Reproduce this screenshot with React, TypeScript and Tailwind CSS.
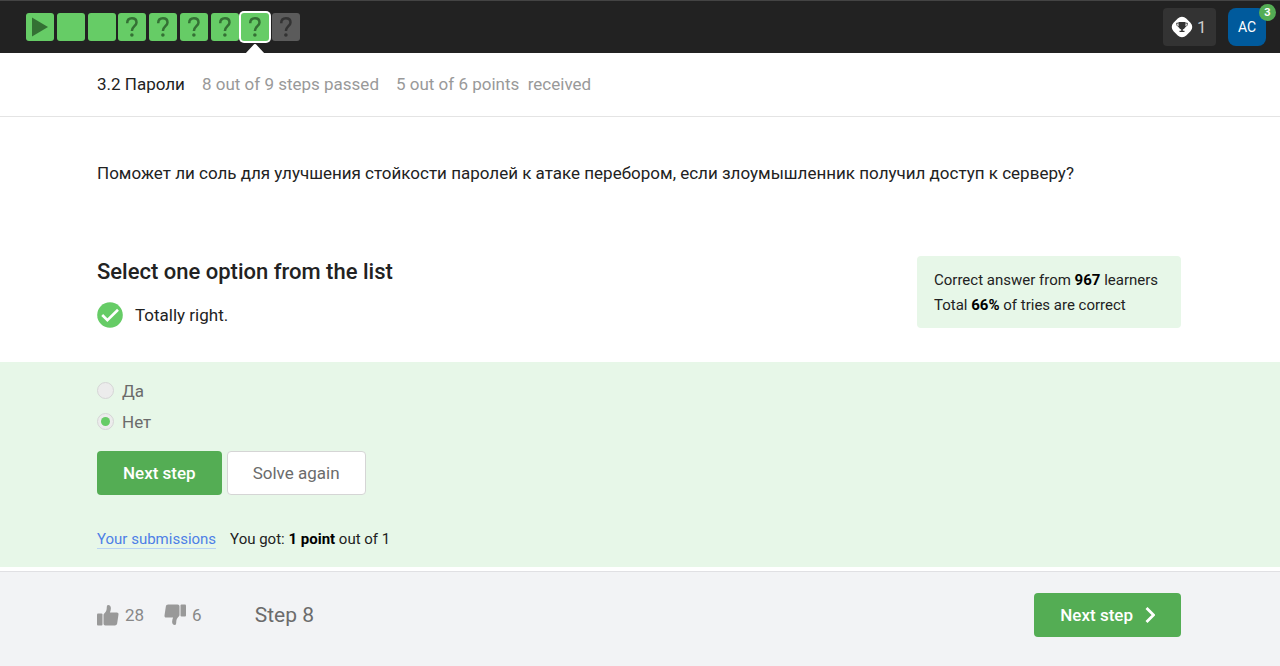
import React, { useState } from "react";

const GUTTER = "pl-[97px] pr-[99px]";

type StepKind = "video" | "text" | "quiz";

const steps: { kind: StepKind; passed: boolean }[] = [
  { kind: "video", passed: true },
  { kind: "text", passed: true },
  { kind: "text", passed: true },
  { kind: "quiz", passed: true },
  { kind: "quiz", passed: true },
  { kind: "quiz", passed: true },
  { kind: "quiz", passed: true },
  { kind: "quiz", passed: true },
  { kind: "quiz", passed: false },
];

const currentStep = 7;

function QuizGlyph() {
  return (
    <svg viewBox="0 0 28 28" className="size-7" fill="none" aria-hidden="true">
      <path
        d="M9.200 10.200C9.200 6.800 11.200 5.200 13.900 5.200s4.600 1.600 4.600 4.200c0 3.700-4.600 4-4.600 8.600"
        stroke="currentColor"
        strokeWidth="2.500"
      />
      <circle cx="13.900" cy="22" r="1.800" fill="currentColor" />
    </svg>
  );
}

function PlayGlyph() {
  return (
    <svg viewBox="0 0 28 28" className="size-7" fill="currentColor" aria-hidden="true">
      <path d="M6 4.500v19L22 14z" />
    </svg>
  );
}

function StepTile({ index, kind, passed }: { index: number; kind: StepKind; passed: boolean }) {
  const active = index === currentStep;
  return (
    <li className="relative">
      <a
        href={"#step-" + (index + 1)}
        aria-label={"Step " + (index + 1)}
        aria-current={active ? "step" : undefined}
        className={
          "flex size-7 items-center justify-center rounded-[3px] " +
          (passed ? "bg-[#66cc66] text-[#347034] " : "bg-[#5b5b5b] text-[#333333] ") +
          (active ? "ring-2 ring-white" : "")
        }
      >
        {kind === "video" && <PlayGlyph />}
        {kind === "quiz" && <QuizGlyph />}
      </a>
      {active && (
        <svg viewBox="0 0 20 10" className="absolute top-[31px] left-1 h-[10px] w-5" fill="#ffffff" aria-hidden="true">
          <path d="M0 10 8.800 .6a1.600 1.600 0 0 1 2.400 0L20 10z" />
        </svg>
      )}
    </li>
  );
}

function ThumbIcon({ down = false }: { down?: boolean }) {
  return (
    <svg viewBox="0 0 22 22" className={down ? "size-[22px] rotate-180" : "size-[22px]"} fill="#999999" aria-hidden="true">
      <rect x="0" y="9.500" width="5.500" height="12" rx="1" />
      <path d="M6.500 11.200c0-.9.5-1.500 1.200-2.200 1.300-1.400 1.900-2.600 2-4.500.1-1.800.1-3.500 1.500-3.500 1.800 0 2.700 1.400 2.700 3.300 0 1.600-.5 3-1 4.200h6.800c1.300 0 2 .9 1.800 2.100l-1.300 8.700c-.2 1.300-1 2.200-2.400 2.200H8.500c-1.300 0-2-.7-2-2z" />
    </svg>
  );
}

function TrophyBadge() {
  return (
    <svg viewBox="0 0 22 22" className="size-[22px]" aria-hidden="true">
      <rect x="2" y="2" width="18" height="18" rx="6" fill="#ffffff" transform="rotate(45 11 11)" />
      <path d="M7.500 6h7v3.500c0 2.200-1.300 3.600-2.700 4v1.200h1.700V16h-5v-1.300h1.700v-1.200c-1.400-.4-2.700-1.800-2.700-4z" fill="#333333" />
      <path d="M7.500 7.200H5.600c0 2 .8 3.300 2.400 3.700M14.500 7.200h1.900c0 2-.8 3.300-2.400 3.700" fill="none" stroke="#333333" strokeWidth=".9" />
    </svg>
  );
}

function CheckBadge() {
  return (
    <svg viewBox="0 0 26 26" className="size-[26px]" fill="none" aria-hidden="true">
      <circle cx="13" cy="13" r="12.800" fill="#66cc66" />
      <path d="m5.200 13 5.200 5.200L21 7.800" stroke="#ffffff" strokeWidth="2.600" />
    </svg>
  );
}

const options = ["Да", "Нет"];

export default function App() {
  const [answer, setAnswer] = useState("Нет");

  return (
    <div className="flex min-h-screen flex-col bg-white font-[Roboto,sans-serif] text-[17px] leading-6 text-[#222222]">
      <header className="flex h-[53px] items-center justify-between border-t border-[#444444] bg-[#222222] pr-[14px] pl-[26px]">
        <nav aria-label="Lesson steps" className="w-[274px]">
          <ol className="flex justify-between">
            {steps.map((step, i) => (
              <StepTile key={i} index={i} kind={step.kind} passed={step.passed} />
            ))}
          </ol>
        </nav>
        <div className="flex items-center gap-3">
          <button type="button" className="flex h-[38px] items-center gap-1 rounded-[4px] bg-[#333333] px-2 text-[#cccccc]">
            <TrophyBadge />
            <span className="w-[11px] text-left">1</span>
          </button>
          <button type="button" className="relative size-[38px] rounded-[8px] bg-[#005a9c] text-[14px] text-white">
            AC
            <span className="absolute -top-1 -right-[10px] flex size-[17px] items-center justify-center rounded-full bg-[#54ad54] text-[11px] font-bold leading-none">
              3
            </span>
          </button>
        </div>
      </header>

      <div className={"flex h-16 items-center gap-[17px] border-b border-[#e4e4e4] pb-0.5 text-[#999999] " + GUTTER}>
        <h1 className="text-[#222222]">3.2 Пароли</h1>
        <p>8 out of 9 steps passed</p>
        <p>5 out of 6 points&nbsp; received</p>
      </div>

      <main className="flex flex-col">
        <p className={"pt-11 " + GUTTER}>
          Поможет ли соль для улучшения стойкости паролей к атаке перебором, если злоумышленник получил доступ к серверу?
        </p>

        <div className={"mt-[71px] flex items-start justify-between pb-[34px] " + GUTTER}>
          <div>
            <h2 className="pt-1 text-[22px] leading-6 font-medium">Select one option from the list</h2>
            <p className="mt-[18px] flex items-center gap-3 leading-[26px]">
              <CheckBadge />
              Totally right.
            </p>
          </div>
          <aside className="w-[264px] rounded-[4px] bg-[#e7f7e8] px-[17px] pt-3 pb-[10px] text-[15px] leading-[25px]">
            <p>
              Correct answer from <strong className="text-black">967</strong> learners
            </p>
            <p>
              Total <strong className="text-black">66%</strong> of tries are correct
            </p>
          </aside>
        </div>

        <form className={"bg-[#e7f7e8] pt-[13px] pb-[18px] " + GUTTER} onSubmit={(e) => e.preventDefault()}>
          <fieldset aria-label="Answer" className="text-[#6b6b6b]">
            {options.map((option) => (
              <label key={option} className="flex h-[31px] items-center gap-2">
                <input
                  type="radio"
                  name="answer"
                  value={option}
                  checked={answer === option}
                  onChange={() => setAnswer(option)}
                  className="grid size-[17px] appearance-none place-items-center rounded-full border border-[#d6d6d6] bg-[#ececec] before:size-[9px] before:rounded-full checked:before:bg-[#66cc66]"
                />
                {option}
              </label>
            ))}
          </fieldset>
          <div className="mt-[14px] flex gap-[5px]">
            <button type="submit" className="h-[44px] rounded-[4px] bg-[#54ad54] px-[26px] font-medium text-white">
              Next step
            </button>
            <button type="button" className="h-[44px] rounded-[4px] border border-[#d5d5d5] bg-white px-[25px] text-[#6b6b6b]">
              Solve again
            </button>
          </div>
          <div className="mt-[35px] flex items-start gap-[14px] text-[15px] leading-[18px]">
            <a href="#submissions" className="border-b border-[#b9d3f3] text-[#4d80e6]">
              Your submissions
            </a>
            <p>
              You got: <strong className="text-black">1 point</strong> out of 1
            </p>
          </div>
        </form>
      </main>

      <footer className={"mt-1 flex grow items-start border-t border-[#e0e0e3] bg-[#f2f3f5] pt-[21px] text-[#888888] " + GUTTER}>
        <div className="flex h-[44px] grow items-center">
          <button type="button" aria-label="Like" className="flex items-center gap-[6px]">
            <ThumbIcon />
            28
          </button>
          <button type="button" aria-label="Dislike" className="ml-5 flex items-center gap-[6px]">
            <ThumbIcon down />
            6
          </button>
          <span className="ml-[53px] text-[21px] text-[#6b6b6b]">Step 8</span>
        </div>
        <button type="button" className="flex h-[44px] items-center gap-3 rounded-[4px] bg-[#54ad54] px-[26px] font-medium text-white">
          Next step
          <svg viewBox="0 0 10 18" className="h-[18px] w-[10px]" fill="none" aria-hidden="true">
            <path d="m1.500 2 7 7-7 7" stroke="#ffffff" strokeWidth="2.800" />
          </svg>
        </button>
      </footer>
    </div>
  );
}
